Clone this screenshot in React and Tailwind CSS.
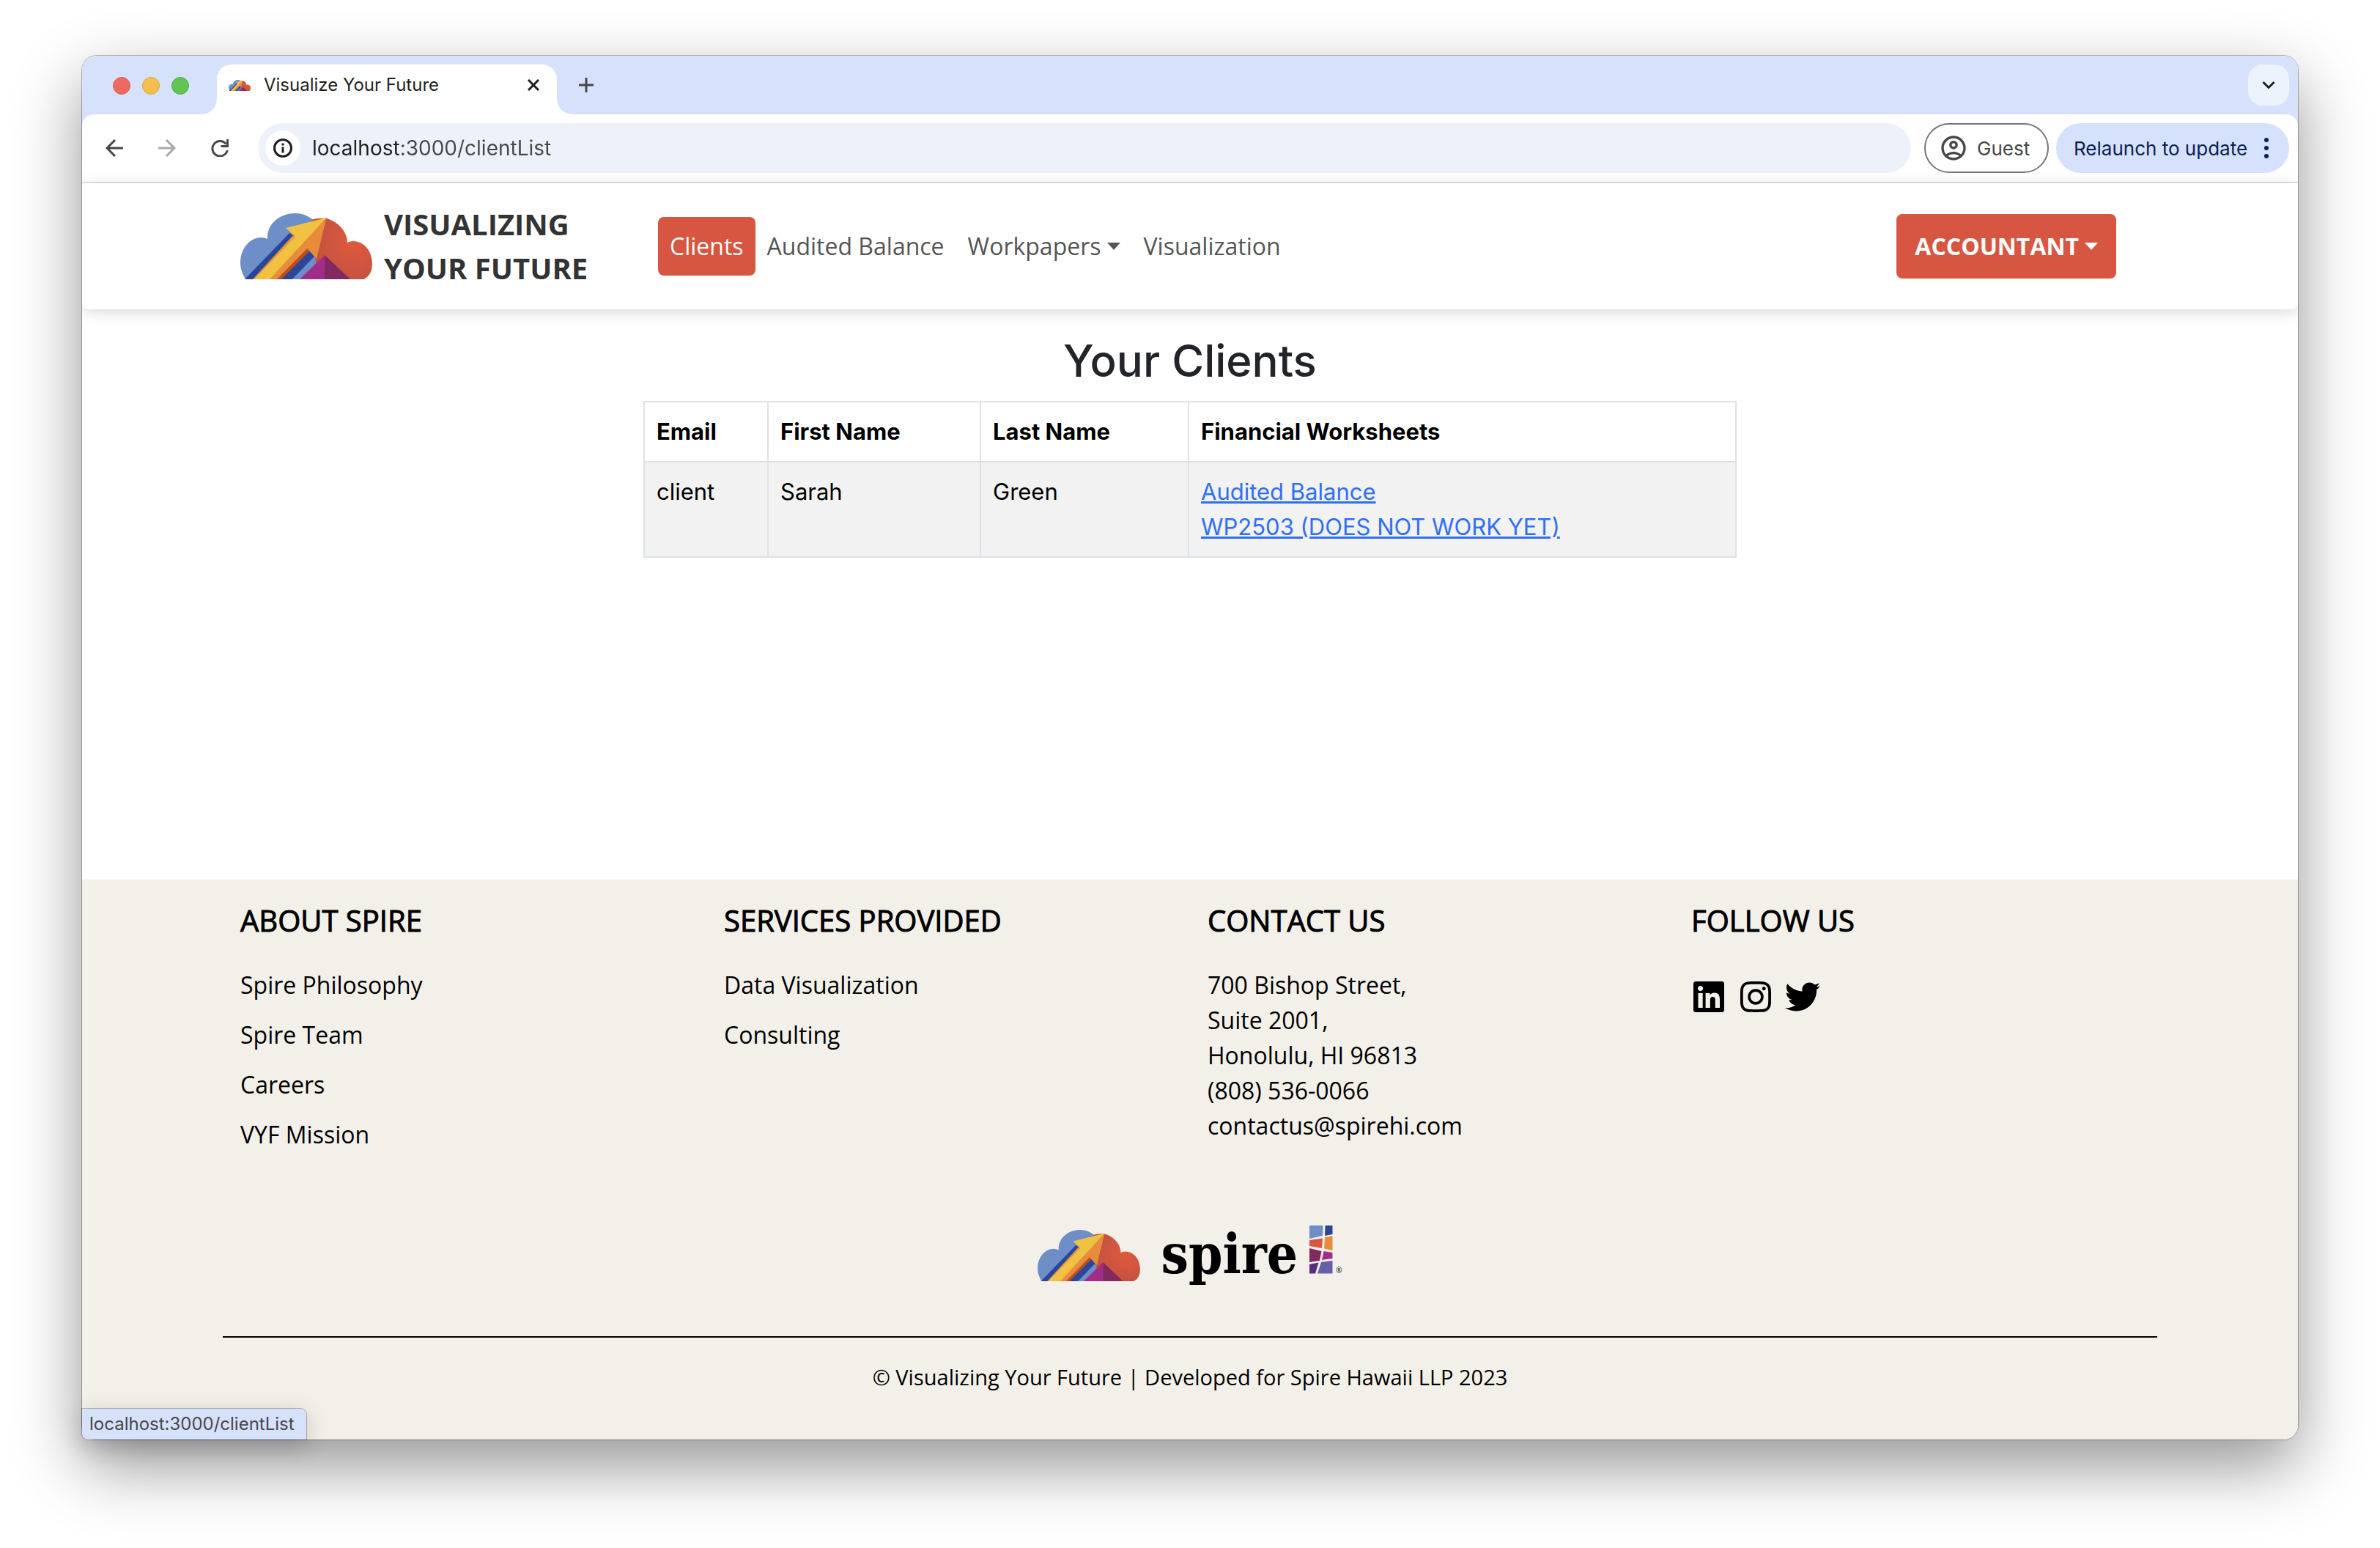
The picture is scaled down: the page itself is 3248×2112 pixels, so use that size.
import React from "react";
import { FaLinkedin, FaInstagram, FaTwitter } from "react-icons/fa";
import { MdOutlineAccountCircle } from "react-icons/md";

function CloudLogo({ className }) {
  const id = React.useId();
  return (
    <svg viewBox="0 0 180 90" className={className} aria-hidden="true">
      <defs>
        <radialGradient id={id} cx="0.7" cy="0.4" r="0.75">
          <stop offset="0" stopColor="#de5a3a" />
          <stop offset="0.5" stopColor="#d05540" />
          <stop offset="1" stopColor="#bd523f" />
        </radialGradient>
      </defs>
      <path d="M7 90C3 83 0 76 0 68C0 47 14 33 28 33Q33 33 37 35C36 13 55 0 75 0Q89 0 99 9L118 30V90Z" fill="#6d8ec7" />
      <path d="M97 9Q105 6 118 7C134 12 146 25 146 40Q149 38 154 38C169 38 180 52 180 69Q180 84 169 90H100V40Z" fill={`url(#${id})`} />
      <path d="M67 27L74 31L18 90H6Z" fill="#2b4599" />
      <path d="M72 30L77 34L24 90H17Z" fill="#e6963a" />
      <path d="M91 48L95 51L57 90H49Z" fill="#bb4d1f" />
      <path d="M95 51L101 59L71 90H56Z" fill="#2b4599" />
      <path d="M101 59L103 63V68L82 90H71Z" fill="#6d8ec7" />
      <path d="M117.500 6L104 62L91 48L50 90H39L75 50Z" fill="#e88c3c" />
      <path d="M117.500 6L62 20L75 32L19 90H40Z" fill="#f1c142" />
      <path d="M115 57L81 90H116Z" fill="#a02e89" />
      <path d="M115 57L150 90H115Z" fill="#82295f" />
    </svg>
  );
}

function TileMark() {
  return (
    <svg viewBox="0 0 32 66" className="h-[66px] w-8" aria-hidden="true">
      <path d="M0 0H18.500L18 14L0 18Z" fill="#6d8ec7" />
      <path d="M21.500 0H31.500V12L21 14Z" fill="#2b4599" />
      <path d="M0 20L18 17.500L17 31L0 28Z" fill="#d75641" />
      <path d="M21 16L31.500 14V34L20 31.500Z" fill="#e88c3c" />
      <path d="M0 31L16.500 35L14 48L0 50Z" fill="#82295f" />
      <path d="M19.500 35L31.500 37V45L17 47Z" fill="#a02e89" />
      <path d="M0 53L12.500 50.500L8 65.500H0Z" fill="#572d80" />
      <path d="M16 50L31.500 48V65.500H11Z" fill="#6660a8" />
    </svg>
  );
}

function Caret() {
  return (
    <svg viewBox="0 0 18 10" className="h-[10px] w-[18px]" fill="currentColor" aria-hidden="true">
      <path d="M0 0H18L9 10Z" />
    </svg>
  );
}

function TabStrip() {
  return (
    <div className="flex h-20 items-stretch bg-[#d6e1fc] pl-[42px] pr-3">
      <div className="flex items-center gap-4 pt-[2px]">
        <span className="size-6 rounded-full border border-[#d8594d] bg-[#ed6a5e]" />
        <span className="size-6 rounded-full border border-[#dba63c] bg-[#f5bf4f]" />
        <span className="size-6 rounded-full border border-[#4dad3c] bg-[#61c554]" />
      </div>
      <svg viewBox="0 0 24 24" className="ml-[14px] size-6 self-end" fill="#fff" aria-hidden="true">
        <path d="M24 0V24H0Q24 24 24 0Z" />
      </svg>
      <div className="mt-3 flex w-[464px] items-center rounded-t-[20px] bg-white pb-3 pl-4 pr-6">
        <CloudLogo className="h-[15px] w-[30px]" />
        <span className="ml-[18px] flex-1 text-2xl text-[#1f1f1f]">Visualize Your Future</span>
        <button type="button" aria-label="Close tab">
          <svg viewBox="0 0 16 16" className="size-4" fill="none" stroke="#1f1f1f" strokeWidth="3" aria-hidden="true">
            <path d="M1 1L15 15M15 1L1 15" />
          </svg>
        </button>
      </div>
      <svg viewBox="0 0 24 24" className="size-6 self-end" fill="#fff" aria-hidden="true">
        <path d="M0 0V24H24Q0 24 0 0Z" />
      </svg>
      <button type="button" aria-label="New tab" className="ml-[6px]">
        <svg viewBox="0 0 20 20" className="size-5" fill="none" stroke="#474747" strokeWidth="3" aria-hidden="true">
          <path d="M10 0V20M0 10H20" />
        </svg>
      </button>
      <button type="button" aria-label="Search tabs" className="my-3 ml-auto flex size-14 items-center justify-center rounded-[20px] bg-[#edf3fd]">
        <svg viewBox="0 0 18 12" className="h-3 w-[18px]" fill="none" stroke="#1f1f1f" strokeWidth="3" aria-hidden="true">
          <path d="M1.500 2L9 9.500L16.500 2" />
        </svg>
      </button>
    </div>
  );
}

function Toolbar() {
  return (
    <div className="bg-[#d6e1fc]">
      <div className="flex items-center rounded-t-2xl border-b-2 border-[#e1e2e4] bg-white px-3 py-3">
        <button type="button" aria-label="Back" className="ml-5">
          <svg viewBox="0 0 24 24" className="size-6" fill="none" stroke="#474747" strokeWidth="3" aria-hidden="true">
            <path d="M24 12H2M13 1L2 12L13 23" />
          </svg>
        </button>
        <button type="button" aria-label="Forward" className="ml-12" disabled>
          <svg viewBox="0 0 24 24" className="size-6" fill="none" stroke="#a9a9a9" strokeWidth="3" aria-hidden="true">
            <path d="M0 12H22M11 1L22 12L11 23" />
          </svg>
        </button>
        <button type="button" aria-label="Reload" className="ml-12">
          <svg viewBox="0 0 24 24" className="size-6" fill="none" stroke="#474747" strokeWidth="3" aria-hidden="true">
            <path d="M20.500 6.500A10.300 10.300 0 1 0 22.300 15M22.500 0V9.500H13.500" />
          </svg>
        </button>
        <label className="ml-10 flex h-[68px] flex-1 items-center gap-4 rounded-full bg-[#edf2fa] px-[10px]">
          <span className="flex size-12 items-center justify-center rounded-full bg-white">
            <svg viewBox="0 0 26 26" className="size-[26px]" fill="none" stroke="#1f1f1f" strokeWidth="3" aria-hidden="true">
              <circle cx="13" cy="13" r="11.500" />
              <path d="M13 11.500V19.500M13 6.500V9.500" />
            </svg>
          </span>
          <input
            aria-label="Address"
            defaultValue="localhost:3000/clientList"
            className="min-w-0 flex-1 bg-[linear-gradient(90deg,#1f1f1f_118px,#474747_118px)] bg-clip-text text-[28px] text-transparent outline-none"
          />
        </label>
        <button type="button" className="ml-[18px] flex h-[68px] w-[170px] items-center gap-3 rounded-full border-2 border-[#747775] pl-[18px] text-[26px] text-[#474747]">
          <MdOutlineAccountCircle className="size-10" />
          Guest
        </button>
        <button type="button" className="ml-[10px] flex h-[68px] w-[318px] items-center justify-between rounded-full bg-[#d6e1fc] pl-6 pr-7 text-[26px] text-[#0a1e50]">
          Relaunch to update
          <svg viewBox="0 0 6 28" className="h-7 w-[6px]" fill="currentColor" aria-hidden="true">
            <circle cx="3" cy="3" r="3" />
            <circle cx="3" cy="14" r="3" />
            <circle cx="3" cy="25" r="3" />
          </svg>
        </button>
      </div>
    </div>
  );
}

function SiteHeader() {
  return (
    <header className="relative rounded-b-lg bg-white font-['Open_Sans',sans-serif] shadow-[0_4px_20px_rgba(0,0,0,0.15)]">
      <div className="mx-auto flex max-w-[2640px] items-center px-6 py-[26px]">
        <a href="#home" className="flex w-[570px] items-center gap-4">
          <CloudLogo className="h-[90px] w-[180px]" />
          <span className="text-[40px] leading-[60px] font-bold text-[#333]">
            VISUALIZING
            <br />
            YOUR FUTURE
          </span>
        </a>
        <nav className="flex text-[32px] leading-[48px] text-[#555]">
          <a href="#clients" className="rounded-lg bg-[#d65641] px-4 py-4 text-white">Clients</a>
          <a href="#audited" className="px-4 py-4">Audited Balance</a>
          <button type="button" className="flex items-center gap-2 px-4 py-4">
            Workpapers
            <Caret />
          </button>
          <a href="#visualization" className="px-4 py-4">Visualization</a>
        </nav>
        <button type="button" className="mr-8 ml-auto flex items-center gap-2 rounded-lg bg-[#d65641] px-[25px] py-5 text-[32px] leading-[48px] font-bold text-white">
          ACCOUNTANT
          <Caret />
        </button>
      </div>
    </header>
  );
}

const cell = "border-2 border-[#dee2e6] p-4 text-left align-top";

function Clients() {
  return (
    <main className="flex-1 bg-white px-6 pt-8">
      <h2 className="text-center text-[60px] leading-[77px] font-medium text-[#212529]">Your Clients</h2>
      <table className="mx-auto mt-4 w-full max-w-[1492px] table-fixed border-collapse text-[31px] leading-[48px] text-black">
        <colgroup>
          <col className="w-[169px]" />
          <col className="w-[290px]" />
          <col className="w-[284px]" />
          <col />
        </colgroup>
        <thead>
          <tr>
            <th className={cell}>Email</th>
            <th className={cell}>First Name</th>
            <th className={cell}>Last Name</th>
            <th className={cell}>Financial Worksheets</th>
          </tr>
        </thead>
        <tbody>
          <tr className="bg-[#f2f2f2]">
            <td className={cell}>client</td>
            <td className={cell}>Sarah</td>
            <td className={cell}>Green</td>
            <td className={cell}>
              <a href="#balance" className="text-[#2f6ff6] underline">Audited Balance</a>
              <br />
              <a href="#wp2503" className="text-[#2f6ff6] underline">WP2503 (DOES NOT WORK YET)</a>
            </td>
          </tr>
        </tbody>
      </table>
    </main>
  );
}

function Column({ title, children }) {
  return (
    <section className="pl-6">
      <h5 className="mb-10 text-[40px] leading-[48px] font-medium [-webkit-text-stroke:1px_#000]">{title}</h5>
      {children}
    </section>
  );
}

function LinkList({ items }) {
  return (
    <ul className="flex flex-col gap-5">
      {items.map((item) => (
        <li key={item}>
          <a href="#footer">{item}</a>
        </li>
      ))}
    </ul>
  );
}

function Footer() {
  return (
    <footer className="bg-[#f3f0ea] pt-8 pb-[61px] font-['Open_Sans',sans-serif] text-[32px] leading-[48px] text-black">
      <div className="mx-auto max-w-[2640px]">
        <div className="grid grid-cols-4">
          <Column title="ABOUT SPIRE">
            <LinkList items={["Spire Philosophy", "Spire Team", "Careers", "VYF Mission"]} />
          </Column>
          <Column title="SERVICES PROVIDED">
            <LinkList items={["Data Visualization", "Consulting"]} />
          </Column>
          <Column title="CONTACT US">
            <address className="not-italic">
              700 Bishop Street,
              <br />
              Suite 2001,
              <br />
              Honolulu, HI 96813
              <br />
              (808) 536-0066
              <br />
              contactus@spirehi.com
            </address>
          </Column>
          <Column title="FOLLOW US">
            <div className="flex gap-4 pt-4 text-5xl">
              <a href="#linkedin" aria-label="LinkedIn"><FaLinkedin /></a>
              <a href="#instagram" aria-label="Instagram"><FaInstagram /></a>
              <a href="#twitter" aria-label="Twitter"><FaTwitter /></a>
            </div>
          </Column>
        </div>
        <div className="mt-[92px] flex h-[98px] items-center justify-center">
          <CloudLogo className="h-[70px] w-[140px]" />
          <span className="ml-7 pb-1 font-['DejaVu_Serif_Condensed','DejaVu_Serif',serif] text-[74px] leading-[72px] font-bold">spire</span>
          <span className="mt-2 ml-4 flex items-end gap-1 self-start">
            <TileMark />
            <span className="text-[10px] leading-[10px]">®</span>
          </span>
        </div>
        <hr className="mt-[61px] border-t-2 border-black" />
        <p className="mt-[30px] text-center text-[29px] leading-[48px]">© Visualizing Your Future | Developed for Spire Hawaii LLP 2023</p>
      </div>
    </footer>
  );
}

export default function App() {
  return (
    <div className="flex min-h-screen flex-col bg-white px-28 pt-[76px] pb-[148px] font-['Inter',sans-serif]">
      <div className="relative flex flex-1 flex-col rounded-[20px] shadow-[0_0_0_1px_rgba(0,0,0,0.28),0_36px_90px_rgba(0,0,0,0.42)]">
        <div className="flex flex-1 flex-col overflow-hidden rounded-[20px] bg-white">
          <TabStrip />
          <Toolbar />
          <SiteHeader />
          <Clients />
          <Footer />
        </div>
        <div className="absolute bottom-0 left-0 rounded-tr-lg rounded-bl-lg bg-[#d6e1fc] pr-4 pl-[10px] text-2xl leading-[42px] text-[#474747] shadow-[0_0_0_1px_rgba(0,0,0,0.25),0_8px_32px_rgba(0,0,0,0.2)]">
          localhost:3000/clientList
        </div>
      </div>
    </div>
  );
}
